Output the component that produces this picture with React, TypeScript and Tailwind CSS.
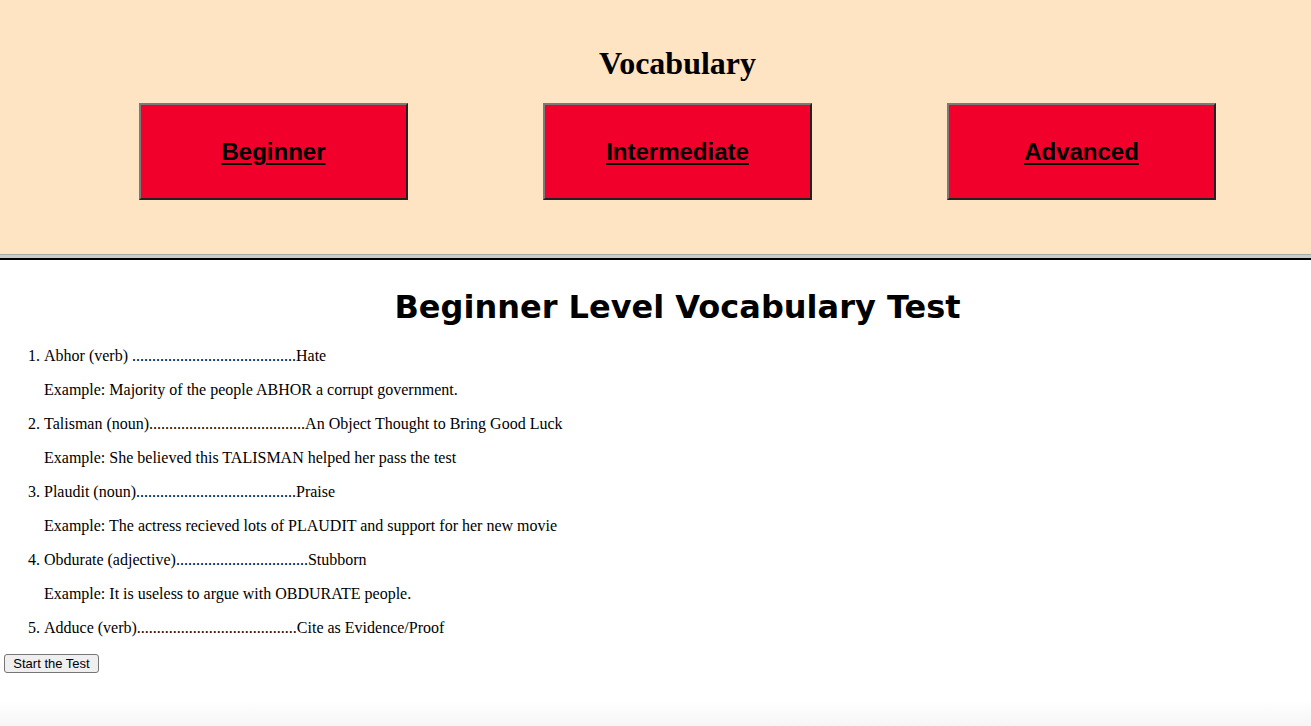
import React from "react";

const levels = ["Beginner", "Intermediate", "Advanced"];

const words = [
  {
    word: "Abhor (verb) .........................................",
    meaning: "Hate",
    example: "Example: Majority of the people ABHOR a corrupt government.",
  },
  {
    word: "Talisman (noun).......................................",
    meaning: "An Object Thought to Bring Good Luck",
    example: "Example: She believed this TALISMAN helped her pass the test",
  },
  {
    word: "Plaudit (noun)........................................",
    meaning: "Praise",
    example: "Example: The actress recieved lots of PLAUDIT and support for her new movie",
  },
  {
    word: "Obdurate (adjective).................................",
    meaning: "Stubborn",
    example: "Example: It is useless to argue with OBDURATE people.",
  },
  {
    word: "Adduce (verb)........................................",
    meaning: "Cite as Evidence/Proof",
    example: "",
  },
];

export default function App() {
  return (
    <div className="min-h-[726px] bg-white text-black">
      <header className="bg-[#ffe4c4] pt-[44px] pb-[54px] pl-[44px]">
        <h1 className="text-center text-[32px] leading-[38px] font-bold font-['Liberation_Serif',serif]">
          Vocabulary
        </h1>
        <div className="mt-[21px] flex justify-center gap-[135px]">
          {levels.map((l) => (
            <a
              key={l}
              href="#"
              className="flex h-[97px] w-[269px] items-center justify-center border-2 border-t-[#7a7a7a] border-l-[#7a7a7a] border-b-[#222] border-r-[#222] bg-[#f0002a] font-['Liberation_Sans',Arial,sans-serif] text-[24px] font-bold text-black underline decoration-2 underline-offset-[3px]"
            >
              {l}
            </a>
          ))}
        </div>
      </header>
      <div className="h-[4px] border-t border-[#a9a9a9] bg-[#cbcbcb]" />
      <div className="h-[2px] bg-black" />

      <h2 className="mt-[29px] mb-[21px] pl-[44px] text-center text-[32px] leading-[37px] font-bold font-['DejaVu_Sans',Verdana,sans-serif]">
        Beginner Level Vocabulary Test
      </h2>

      <ol className="mb-[13px] list-decimal pl-[44px] font-['Liberation_Serif',serif] text-[16px] leading-[18px]">
        {words.map((w, i) => (
          <li key={i}>
            {w.word}
            {w.meaning}
            {w.example && <p className="my-4">{w.example}</p>}
          </li>
        ))}
      </ol>

      <button className="ml-[4px] h-[19px] w-[95px] rounded-[3px] border border-[#767676] bg-[#efefef] font-['Liberation_Sans',Arial,sans-serif] text-[13px] leading-[15px] text-black">
        Start the Test
      </button>

      <div className="mt-[27px] h-[26px] bg-gradient-to-b from-white to-[#f5f5f5]" />
    </div>
  );
}
